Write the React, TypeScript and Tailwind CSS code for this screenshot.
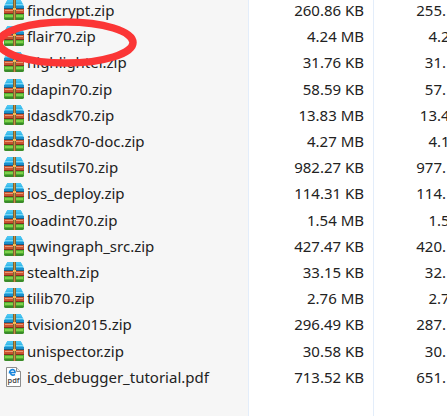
const files: [string, string, string][] = [
  ["findcrypt.zip", "260.86 KB", "255."],
  ["flair70.zip", "4.24 MB", "4.2"],
  ["highlighter.zip", "31.76 KB", "31."],
  ["idapin70.zip", "58.59 KB", "57."],
  ["idasdk70.zip", "13.83 MB", "13.4"],
  ["idasdk70-doc.zip", "4.27 MB", "4.1"],
  ["idsutils70.zip", "982.27 KB", "977."],
  ["ios_deploy.zip", "114.31 KB", "114."],
  ["loadint70.zip", "1.54 MB", "1.5"],
  ["qwingraph_src.zip", "427.47 KB", "420."],
  ["stealth.zip", "33.15 KB", "32."],
  ["tilib70.zip", "2.76 MB", "2.7"],
  ["tvision2015.zip", "296.49 KB", "287."],
  ["unispector.zip", "30.58 KB", "30."],
  ["ios_debugger_tutorial.pdf", "713.52 KB", "651."],
];

function ZipIcon() {
  return (
    <svg className="h-5 w-5 shrink-0" viewBox="0 0 20 20" aria-hidden="true">
      <path d="M3.500 0h13L19 4l1 3H0l1-3z" fill="#35b9ea" />
      <path d="M3.500 0h13l1.500 2.500H2z" fill="#4cc6f2" />
      <path d="M1 4h18v1H1z" fill="#7ad6f6" />
      <path d="M0 6h20v2H0z" fill="#1d8fcb" />
      <path d="M0 8h20v1H0z" fill="#1a5b80" />
      <path d="M0 9h20v4H0z" fill="#c9532f" />
      <path d="M1 10h18v1H1z" fill="#e99a74" />
      <path d="M0 13h20v1H0z" fill="#84301f" />
      <path d="M0 14h20v4q0 2-2 2H2q-2 0-2-2z" fill="#4fae30" />
      <path d="M1 15h18v2H1z" fill="#7fd04c" />
      <path d="M0 18h20q0 2-2 2H2q-2 0-2-2z" fill="#3a8a2a" />
      <path d="M9 0h3v20H9z" fill="#7d6334" />
      <path d="M10 0h1v20h-1z" fill="#c79743" />
      <path d="M9 8h3v2H9z" fill="#f0bf55" />
    </svg>
  );
}

function PdfIcon() {
  return (
    <svg className="h-5 w-5 shrink-0" viewBox="0 0 20 20" aria-hidden="true">
      <path d="M2.500.5h10l4 4v15h-14z" fill="#fff" stroke="#8d8d8d" />
      <path d="M12.500.5v4h4" fill="#eee" stroke="#8d8d8d" />
      <path d="M5.500 6.500C5 1.500 11.500 1.500 11 5.500H6.500c.3 3 2.500 3 4.500 2" fill="none" stroke="#1684dc" strokeWidth="1.600" />
      <text x="9.500" y="16" textAnchor="middle" fontSize="7.500" fontWeight="600" fontFamily="Open Sans, sans-serif" fill="#444">pdf</text>
    </svg>
  );
}

export default function App() {
  return (
    <main className="relative flow-root min-h-screen overflow-hidden bg-[linear-gradient(to_right,#f6f6f6_248px,#e3edfa_248px,#e3edfa_249px,#ffffff_249px,#ffffff_373px,#e3edfa_373px,#e3edfa_374px,#ffffff_374px)] font-['Noto_Sans',sans-serif] text-[15px] leading-5 text-[#222]">
      <table className="-mt-[3px] h-[393px] w-full table-fixed border-collapse whitespace-nowrap">
        <colgroup>
          <col className="w-[249px]" />
          <col className="w-[125px]" />
          <col />
        </colgroup>
        <tbody>
          {files.map(([name, size, packed]) => (
            <tr key={name}>
              <td className="p-0 pl-1">
                <span className="flex items-start gap-[3px]">
                  {name.endsWith(".pdf") ? <PdfIcon /> : <ZipIcon />}
                  <span>{name}</span>
                </span>
              </td>
              <td className="p-0 pr-2.5 text-right">{size}</td>
              <td className="overflow-hidden p-0">
                <span className={size.endsWith("MB") ? "inline-block w-[67px] text-right" : "inline-block w-[72px] text-right"}>
                  {packed.split(".")[0]}.
                </span>
                {packed.split(".")[1]}
              </td>
            </tr>
          ))}
        </tbody>
      </table>
      <svg className="pointer-events-none absolute top-0 left-0 h-20 w-36" viewBox="0 0 144 80" aria-hidden="true">
        <ellipse cx="66" cy="42.500" rx="67" ry="20.500" fill="none" stroke="#fb3636" strokeWidth="7.500" />
      </svg>
    </main>
  );
}
